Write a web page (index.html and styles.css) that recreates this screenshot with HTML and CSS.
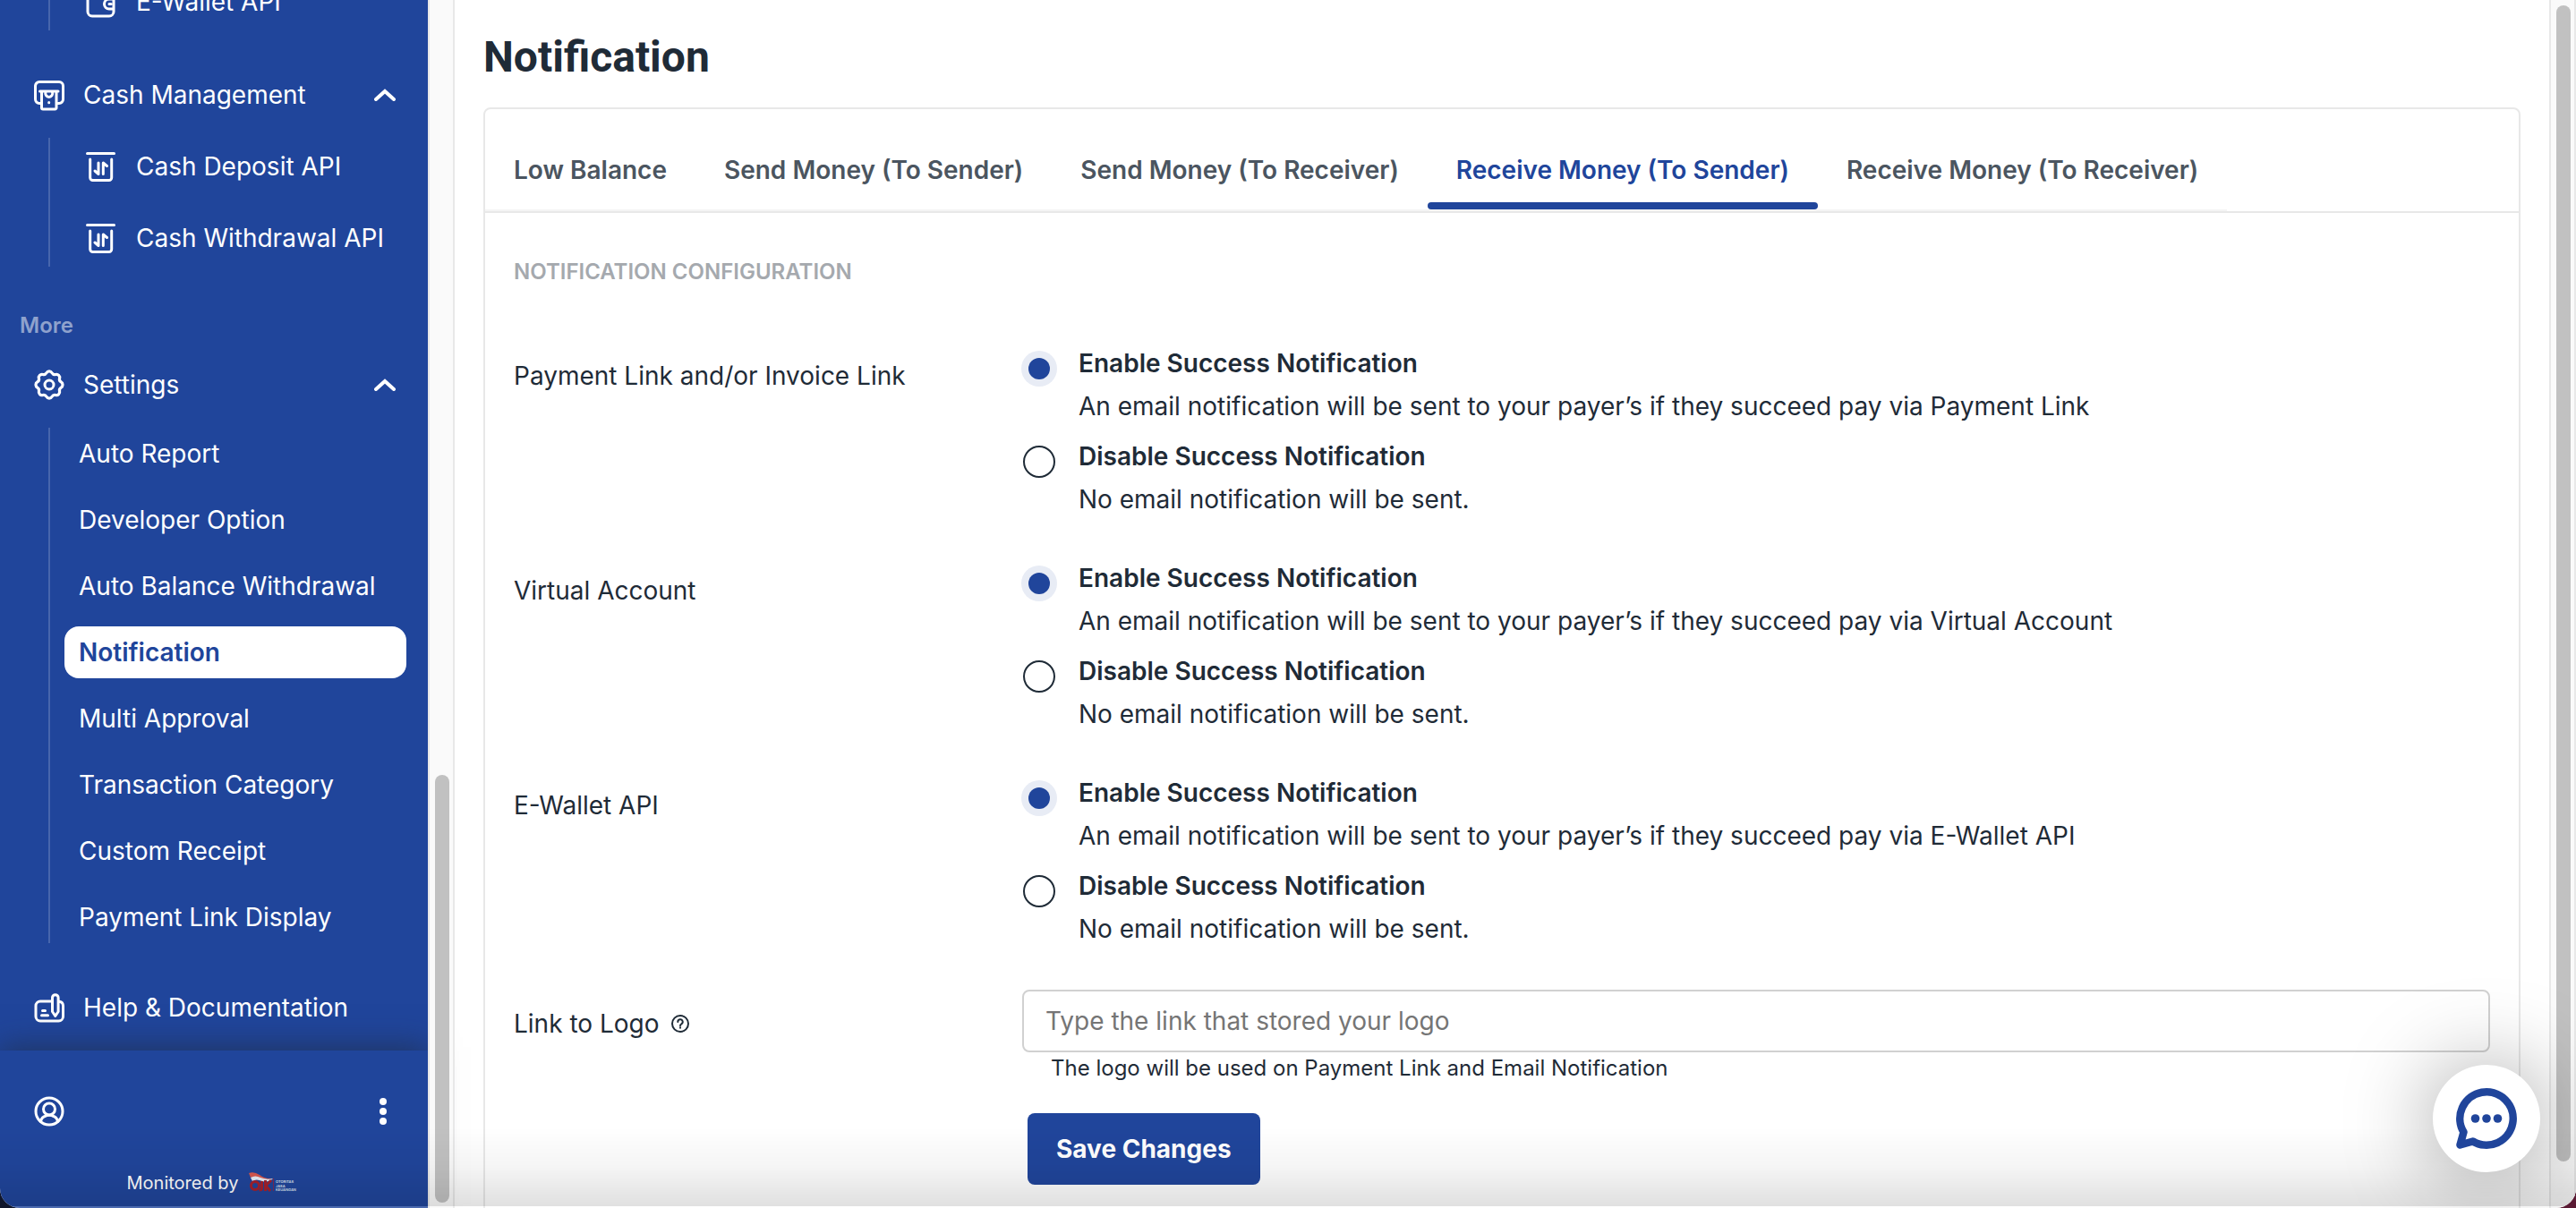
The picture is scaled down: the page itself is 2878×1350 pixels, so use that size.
FILE: index.html
```html
<!DOCTYPE html>
<html lang="en">
<head>
<meta charset="utf-8">
<title>Notification</title>
<link rel="stylesheet" href="styles.css">
</head>
<body>
<svg width="0" height="0" class="sprite" aria-hidden="true">
  <symbol id="wallet" viewBox="0 0 40 40">
    <path d="M6 12a7 7 0 0 1 7-7h15a7 7 0 0 1 7 7v19a5 5 0 0 1-5 5H11a5 5 0 0 1-5-5zM35 17H30a5.500 5.500 0 0 0 0 11h5M30 22.500h2"/>
  </symbol>
  <symbol id="cash" viewBox="0 0 40 40">
    <path d="M10 29.500H9A4.500 4.500 0 0 1 4.500 25V10A4.500 4.500 0 0 1 9 5.500h22a4.500 4.500 0 0 1 4.500 4.500v15a4.500 4.500 0 0 1-4.500 4.500h-1M9.500 16h20.500M11.500 16v18.500a1.500 1.500 0 0 0 1.500 1.500h13.500a1.500 1.500 0 0 0 1.500-1.500V16M16 17a4 4 0 1 0 7.500 0M19.700 28.500v.2"/>
  </symbol>
  <symbol id="bin" viewBox="0 0 40 40">
    <path d="M5.500 5.500h30M8.700 12v20.500a3 3 0 0 0 3 3h18a3 3 0 0 0 3-3V12M18 16v12.500l-4-3.500M23.300 28.500V16l4.200 3.500"/>
  </symbol>
  <symbol id="gear" viewBox="-20 -20 40 40">
    <path transform="scale(1.080)" d="M12.300-2.830A3.300 3.300 0 0 1 12.300 2.830A3.500 3.500 0 0 0 10.690 6.680A3.300 3.300 0 0 1 6.680 10.690A3.500 3.500 0 0 0 2.830 12.300A3.300 3.300 0 0 1-2.830 12.300A3.500 3.500 0 0 0-6.680 10.690A3.300 3.300 0 0 1-10.690 6.680A3.500 3.500 0 0 0-12.300 2.830A3.300 3.300 0 0 1-12.300-2.830A3.500 3.500 0 0 0-10.690-6.680A3.300 3.300 0 0 1-6.680-10.690A3.500 3.500 0 0 0-2.830-12.300A3.300 3.300 0 0 1 2.830-12.300A3.500 3.500 0 0 0 6.680-10.690A3.300 3.300 0 0 1 10.690-6.680A3.500 3.500 0 0 0 12.300-2.830Z"/>
    <circle r="5"/>
  </symbol>
  <symbol id="docs" viewBox="0 0 40 40">
    <path d="M22 13H10a5 5 0 0 0-5 5v12a5 5 0 0 0 5 5h20.500a5 5 0 0 0 5-5V18a5 5 0 0 0-4-4.800M23.500 9a3.300 3.300 0 0 1 6.600 0v15.500L26.800 29.500l-3.300-5zM12.500 23.500h3M11.500 28.700h7"/>
  </symbol>
  <symbol id="user" viewBox="0 0 40 40">
    <circle cx="20" cy="20" r="15"/><circle cx="20" cy="17.500" r="6.500"/>
    <path d="M10.500 31.500c.8-4.800 3.500-6 6-6.500M29.500 31.500c-.8-4.800-3.500-6-6-6.500M15 25.500c3-1.500 7-1.500 10 0"/>
  </symbol>
  <symbol id="chevron" viewBox="0 0 24 14"><path d="M2 12 12 3l10 9"/></symbol>
</svg>

<div class="app">
  <aside class="sidebar">
    <nav class="nav" aria-label="Main">
      <ul class="group">
        <li><a class="item item-icon" href="#"><svg class="icon"><use href="#wallet"/></svg>E-Wallet API</a></li>
      </ul>
      <button class="head" type="button" aria-expanded="true"><svg class="icon"><use href="#cash"/></svg>Cash Management<svg class="chevron"><use href="#chevron"/></svg></button>
      <ul class="group">
        <li><a class="item item-icon" href="#"><svg class="icon"><use href="#bin"/></svg>Cash Deposit API</a></li>
        <li><a class="item item-icon" href="#"><svg class="icon"><use href="#bin"/></svg>Cash Withdrawal API</a></li>
      </ul>
      <h2 class="section">More</h2>
      <button class="head head-first" type="button" aria-expanded="true"><svg class="icon"><use href="#gear"/></svg>Settings<svg class="chevron"><use href="#chevron"/></svg></button>
      <ul class="group">
        <li><a class="item" href="#">Auto Report</a></li>
        <li><a class="item" href="#">Developer Option</a></li>
        <li><a class="item" href="#">Auto Balance Withdrawal</a></li>
        <li><a class="item item-active" href="#" aria-current="page">Notification</a></li>
        <li><a class="item" href="#">Multi Approval</a></li>
        <li><a class="item" href="#">Transaction Category</a></li>
        <li><a class="item" href="#">Custom Receipt</a></li>
        <li><a class="item" href="#">Payment Link Display</a></li>
      </ul>
      <a class="head" href="#"><svg class="icon"><use href="#docs"/></svg>Help &amp; Documentation</a>
    </nav>
    <div class="account">
      <div class="account-row">
        <svg class="icon"><use href="#user"/></svg>
        <button class="more" type="button" aria-label="Account menu"><svg width="8" height="30" viewBox="0 0 8 30"><circle cx="4" cy="4" r="4"/><circle cx="4" cy="15" r="4"/><circle cx="4" cy="26" r="4"/></svg></button>
      </div>
      <div class="monitor">Monitored by
        <svg width="58" height="24" viewBox="0 0 58 24" role="img" aria-label="OJK">
          <path d="M0 1Q6-1 12 3q6 5 15 4-7 3-14 0Q7 4 2 6z" fill="#d8584f"/>
          <path d="M2 6Q7 3 13 6q7 3 14 1-5 5-12 3Q8 7 4 10z" fill="#e9edf5"/>
          <circle cx="7" cy="15" r="4.500" fill="none" stroke="#a5202c" stroke-width="3"/>
          <path d="M14.500 10v8q0 2-3 2M18.500 9v12M25 9l-6 6 5 6" fill="none" stroke="#a5202c" stroke-width="3"/>
          <path d="M27.500 7v14" stroke="#7a2a55"/>
          <g fill="#dfe5f2" font-family="Inter, sans-serif" font-size="4" font-weight="600"><text x="30" y="12">OTORITAS</text><text x="30" y="16.500">JASA</text><text x="30" y="21">KEUANGAN</text></g>
        </svg>
      </div>
    </div>
  </aside>
  <div class="track track-side" aria-hidden="true"><div class="thumb"></div></div>

  <main class="main">
    <h1 class="title">Notification</h1>
    <section class="card">
      <div class="tabbar">
        <div class="tabs" role="tablist">
          <button class="tab" type="button" role="tab">Low Balance</button>
          <button class="tab" type="button" role="tab">Send Money (To Sender)</button>
          <button class="tab" type="button" role="tab">Send Money (To Receiver)</button>
          <button class="tab tab-active" type="button" role="tab" aria-selected="true">Receive Money (To Sender)</button>
          <button class="tab" type="button" role="tab">Receive Money (To Receiver)</button>
        </div>
      </div>
      <form class="form">
        <h2 class="caption">NOTIFICATION CONFIGURATION</h2>
        <div class="row" role="radiogroup" aria-labelledby="g1">
          <span class="label" id="g1">Payment Link and/or Invoice Link</span>
          <div class="options">
            <label class="option"><input class="radio" type="radio" name="link" checked><span><b>Enable Success Notification</b><br>An email notification will be sent to your payer’s if they succeed pay via Payment Link</span></label>
            <label class="option"><input class="radio" type="radio" name="link"><span><b>Disable Success Notification</b><br>No email notification will be sent.</span></label>
          </div>
        </div>
        <div class="row" role="radiogroup" aria-labelledby="g2">
          <span class="label" id="g2">Virtual Account</span>
          <div class="options">
            <label class="option"><input class="radio" type="radio" name="va" checked><span><b>Enable Success Notification</b><br>An email notification will be sent to your payer’s if they succeed pay via Virtual Account</span></label>
            <label class="option"><input class="radio" type="radio" name="va"><span><b>Disable Success Notification</b><br>No email notification will be sent.</span></label>
          </div>
        </div>
        <div class="row" role="radiogroup" aria-labelledby="g3">
          <span class="label" id="g3">E-Wallet API</span>
          <div class="options">
            <label class="option"><input class="radio" type="radio" name="wallet" checked><span><b>Enable Success Notification</b><br>An email notification will be sent to your payer’s if they succeed pay via E-Wallet API</span></label>
            <label class="option"><input class="radio" type="radio" name="wallet"><span><b>Disable Success Notification</b><br>No email notification will be sent.</span></label>
          </div>
        </div>
        <div class="row row-field">
          <label class="label" for="logo">Link to Logo
            <svg class="hint" viewBox="0 0 20 20"><circle cx="10" cy="10" r="9"/><path d="M7.300 8a2.700 2.700 0 1 1 4 2.300q-1.300.7-1.300 2M10 14.300v.4"/></svg>
          </label>
          <div class="field">
            <input class="input" id="logo" type="text" placeholder="Type the link that stored your logo">
            <p class="note">The logo will be used on Payment Link and Email Notification</p>
            <button class="save" type="submit">Save Changes</button>
          </div>
        </div>
      </form>
    </section>
  </main>
  <div class="track track-main" aria-hidden="true"><div class="thumb"></div></div>
  <div class="shade"></div>
  <button class="chat" type="button" aria-label="Open chat">
    <svg width="72" height="72" viewBox="-36 -36 72 72"><path d="M-25.500 15.200A29.700 29.700 0 1 1-15.200 25.500L-29.500 29.500Z" fill="none" stroke="#20459b" stroke-width="8.500" stroke-linejoin="round"/><g fill="#20459b"><circle cx="-12.500" r="4.800"/><circle r="4.800"/><circle cx="12.500" r="4.800"/></g></svg>
  </button>
</div>
</body>
</html>
```
FILE: styles.css
```css
* { box-sizing: border-box; }

:root {
  --blue: #20459b;
  --ink: #1f2b37;
  --line: #e8e8e8;
}

body {
  margin: 0;
  background: linear-gradient(90deg, #10162a, #5a1a33);
  color: var(--ink);
  font: 400 28px/48px Inter, "Liberation Sans", sans-serif;
}

button, input { font: inherit; color: inherit; }
ul { list-style: none; margin: 0; padding: 0; }
.sprite { position: absolute; }

.app {
  position: relative;
  display: flex;
  height: 100vh;
  overflow: hidden;
  background: #fff;
  border-radius: 0 0 22px 22px;
}

/* Sidebar */
.sidebar {
  display: flex;
  flex-direction: column;
  flex: 0 0 478px;
  background: var(--blue);
  color: #fff;
}

.nav {
  display: flex;
  flex-direction: column;
  justify-content: flex-end;
  flex: 1;
  min-height: 0;
  overflow: hidden;
  padding-bottom: 16px;
}

.icon {
  flex: none;
  width: 40px;
  height: 40px;
  fill: none;
  stroke: currentColor;
  stroke-width: 3;
  stroke-linecap: round;
  stroke-linejoin: round;
}

.head {
  display: flex;
  align-items: center;
  flex: none;
  gap: 18px;
  height: 64px;
  margin: 40px 0 0;
  padding: 0 36px 0 35px;
  border: 0;
  background: none;
  color: #fff;
  text-align: left;
  text-decoration: none;
}

.head-first { margin-top: 18px; }

.chevron {
  width: 24px;
  height: 14px;
  margin-left: auto;
  fill: none;
  stroke: currentColor;
  stroke-width: 4;
  stroke-linecap: round;
}

.group {
  display: flex;
  flex-direction: column;
  flex: none;
  gap: 16px;
  margin: 16px 24px 0 54px;
  padding-left: 16px;
  border-left: 2px solid #4766ad;
}

.item {
  display: flex;
  align-items: center;
  height: 58px;
  padding: 0 16px;
  border-radius: 16px;
  color: #fff;
  text-decoration: none;
}

.item-icon {
  gap: 20px;
  height: 64px;
  padding: 0 20px;
}

.item-active {
  background: #fff;
  color: var(--blue);
  font-weight: 600;
}

.section {
  margin: 50px 0 0 22px;
  color: #8fa2cd;
  font-size: 24px;
  font-weight: 600;
  line-height: 32px;
}

.account {
  flex: none;
  height: 176px;
  padding-top: 48px;
  box-shadow: 0 -4px 32px rgba(32, 43, 60, .6);
}

.account-row {
  display: flex;
  align-items: center;
  justify-content: space-between;
  height: 40px;
  padding: 0 46px 0 35px;
}

.more {
  display: flex;
  padding: 0;
  border: 0;
  background: none;
  fill: #fff;
}

.monitor {
  display: flex;
  align-items: center;
  justify-content: center;
  gap: 12px;
  margin-top: 44px;
  font-size: 20px;
  line-height: 32px;
}

/* Scroll tracks */
.track {
  display: flex;
  flex-direction: column;
  flex: none;
  background: #fafafa;
  border: solid var(--line);
  border-width: 0 2px;
}

.track-side { width: 30px; padding: 0 4px 6px 6px; justify-content: flex-end; }
.track-main { width: 30px; padding: 6px 4px 52px 6px; }
.thumb { width: 16px; border-radius: 8px; background: #c1c1c1; }
.track-side .thumb { height: 478px; }
.track-main .thumb { flex: 1; }

/* Main column */
.main {
  flex: 1;
  min-width: 0;
  padding: 32px 32px 0;
}

.title {
  margin: 0 0 24px;
  font-family: Roboto, sans-serif;
  font-size: 48px;
  font-weight: 700;
  line-height: 64px;
}

.card {
  min-height: 100vh;
  border: 2px solid var(--line);
  border-radius: 8px;
}

.tabbar { border-bottom: 2px solid var(--line); }

.tabs {
  display: inline-flex;
  vertical-align: top;
  border-bottom: 2px solid #f4f4f4;
}

.tab {
  position: relative;
  height: 112px;
  padding: 48px 32px 24px;
  border: 0;
  background: none;
  color: #4b5560;
  font-weight: 600;
  line-height: 40px;
}

.tab-active { color: var(--blue); }

.tab-active::after {
  content: "";
  position: absolute;
  inset: auto 0 0;
  height: 8px;
  border-radius: 4px;
  background: var(--blue);
}

.form { padding: 50px 32px 0; }

.caption {
  margin: 0 0 62px;
  color: #a5a9ae;
  font-size: 24px;
  font-weight: 600;
  line-height: 32px;
}

.row {
  display: grid;
  grid-template-columns: 568px 1fr;
  margin-bottom: 40px;
}

.row-field { padding-top: 4px; }
.label { padding-top: 14px; }
.options { display: grid; gap: 8px; }

.option {
  display: flex;
  align-items: flex-start;
  gap: 26px;
  padding-left: 1px;
}

.option b { font-weight: 600; }

.radio {
  appearance: none;
  flex: none;
  width: 36px;
  height: 36px;
  margin: 12px 0 0;
  border: 2px solid var(--ink);
  border-radius: 50%;
}

.radio:checked {
  width: 24px;
  height: 24px;
  margin: 18px 6px 0;
  border: 0;
  background: var(--blue);
  box-shadow: 0 0 0 8px #e8ecf5;
}

.hint {
  width: 20px;
  height: 20px;
  margin-left: 6px;
  fill: none;
  stroke: currentColor;
  stroke-width: 2;
  stroke-linecap: round;
}

.input {
  display: block;
  width: 100%;
  height: 70px;
  padding: 0 24px;
  border: 2px solid #d1d1d1;
  border-radius: 8px;
  background: none;
}

.input::placeholder { color: #757575; opacity: 1; }

.note {
  margin: 2px 0 34px 32px;
  font-size: 24px;
  line-height: 32px;
}

.save {
  display: block;
  height: 80px;
  margin-left: 6px;
  padding: 0 32px;
  border: 0;
  border-radius: 8px;
  background: var(--blue);
  color: #fff;
  font-weight: 700;
}

/* Layers over the page */
.shade {
  position: absolute;
  inset: auto 0 0;
  height: 90px;
  background: linear-gradient(rgba(0, 0, 0, 0), rgba(0, 0, 0, .04) 50%, rgba(0, 0, 0, .12));
  border-bottom: 2px solid rgba(255, 255, 255, .2);
  pointer-events: none;
}

.chat {
  position: absolute;
  right: 40px;
  bottom: 40px;
  display: grid;
  place-items: center;
  width: 120px;
  height: 120px;
  padding: 0;
  border: 0;
  border-radius: 50%;
  background: #fff;
  box-shadow: 0 4px 100px rgba(0, 0, 0, .4);
}
```
